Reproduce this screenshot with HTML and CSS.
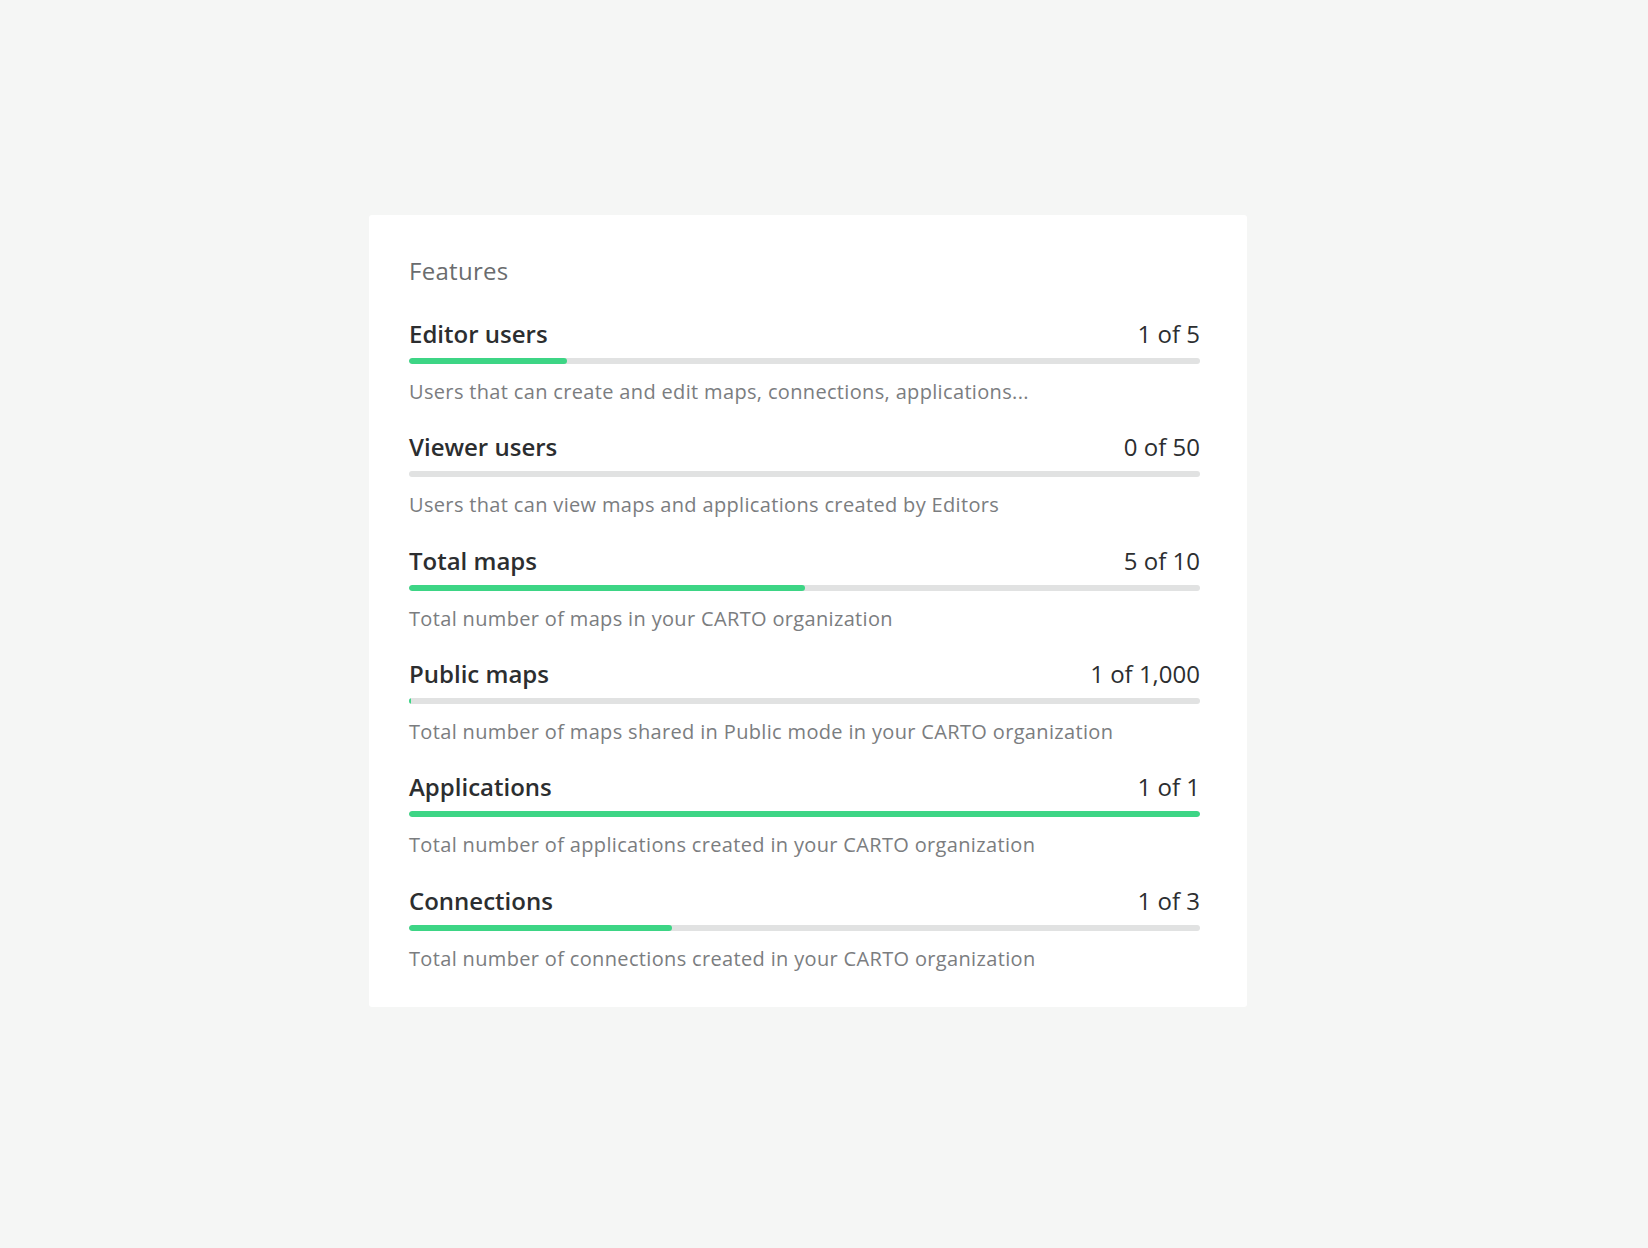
FILE: index.html
```html
<!DOCTYPE html>
<html lang="en">
<head>
<meta charset="utf-8">
<title>Features</title>
<link rel="stylesheet" href="styles.css">
</head>
<body>
<main class="page">
  <section class="card">
    <h2 class="card-title">Features</h2>
    <ul class="features">
      <li class="feature">
        <div class="feature-head"><span class="feature-name">Editor users</span><span class="feature-value">1 of 5</span></div>
        <div class="bar"><div class="bar-fill" style="width:20%"></div></div>
        <p class="feature-desc">Users that can create and edit maps, connections, applications...</p>
      </li>
      <li class="feature">
        <div class="feature-head"><span class="feature-name">Viewer users</span><span class="feature-value">0 of 50</span></div>
        <div class="bar"><div class="bar-fill" style="width:0%"></div></div>
        <p class="feature-desc">Users that can view maps and applications created by Editors</p>
      </li>
      <li class="feature">
        <div class="feature-head"><span class="feature-name">Total maps</span><span class="feature-value">5 of 10</span></div>
        <div class="bar"><div class="bar-fill" style="width:50%"></div></div>
        <p class="feature-desc">Total number of maps in your CARTO organization</p>
      </li>
      <li class="feature">
        <div class="feature-head"><span class="feature-name">Public maps</span><span class="feature-value">1 of 1,000</span></div>
        <div class="bar"><div class="bar-fill" style="width:0.3%"></div></div>
        <p class="feature-desc">Total number of maps shared in Public mode in your CARTO organization</p>
      </li>
      <li class="feature">
        <div class="feature-head"><span class="feature-name">Applications</span><span class="feature-value">1 of 1</span></div>
        <div class="bar"><div class="bar-fill" style="width:100%"></div></div>
        <p class="feature-desc">Total number of applications created in your CARTO organization</p>
      </li>
      <li class="feature">
        <div class="feature-head"><span class="feature-name">Connections</span><span class="feature-value">1 of 3</span></div>
        <div class="bar"><div class="bar-fill" style="width:33.3%"></div></div>
        <p class="feature-desc">Total number of connections created in your CARTO organization</p>
      </li>
    </ul>
  </section>
</main>
</body>
</html>
```

FILE: styles.css
```css
* { box-sizing: border-box; }
html, body { margin: 0; padding: 0; }
body {
  background: #f5f6f5;
  font-family: "Open Sans", "Noto Sans", sans-serif;
  width: 1648px;
  height: 1248px;
}
.page {
  padding-top: 215px;
  padding-left: 369px;
}
.card {
  width: 878px;
  background: #ffffff;
  border-radius: 3px;
  padding: 41px 47px 34px 40px;
}
.card-title {
  margin: 0;
  font-size: 24px;
  line-height: 30px;
  font-weight: 400;
  letter-spacing: 0.3px;
  color: #6a6c6e;
}
.features {
  list-style: none;
  margin: 33px 0 0 0;
  padding: 0;
  display: flex;
  flex-direction: column;
  gap: 26.35px;
}
.feature-head {
  display: flex;
  justify-content: space-between;
  align-items: baseline;
  font-size: 24px;
  line-height: 30px;
  color: #2c2e30;
}
.feature-name { font-weight: 600; }
.feature-value { font-weight: 400; }
.bar {
  margin-top: 9px;
  height: 6px;
  border-radius: 3px;
  background: #e1e2e2;
  overflow: hidden;
}
.bar-fill {
  height: 100%;
  background: #3dd585;
  border-radius: 3px;
}
.feature-desc {
  margin: 14px 0 0 0;
  font-size: 20px;
  line-height: 28px;
  letter-spacing: 0.34px;
  color: #7b7d7f;
}
```
